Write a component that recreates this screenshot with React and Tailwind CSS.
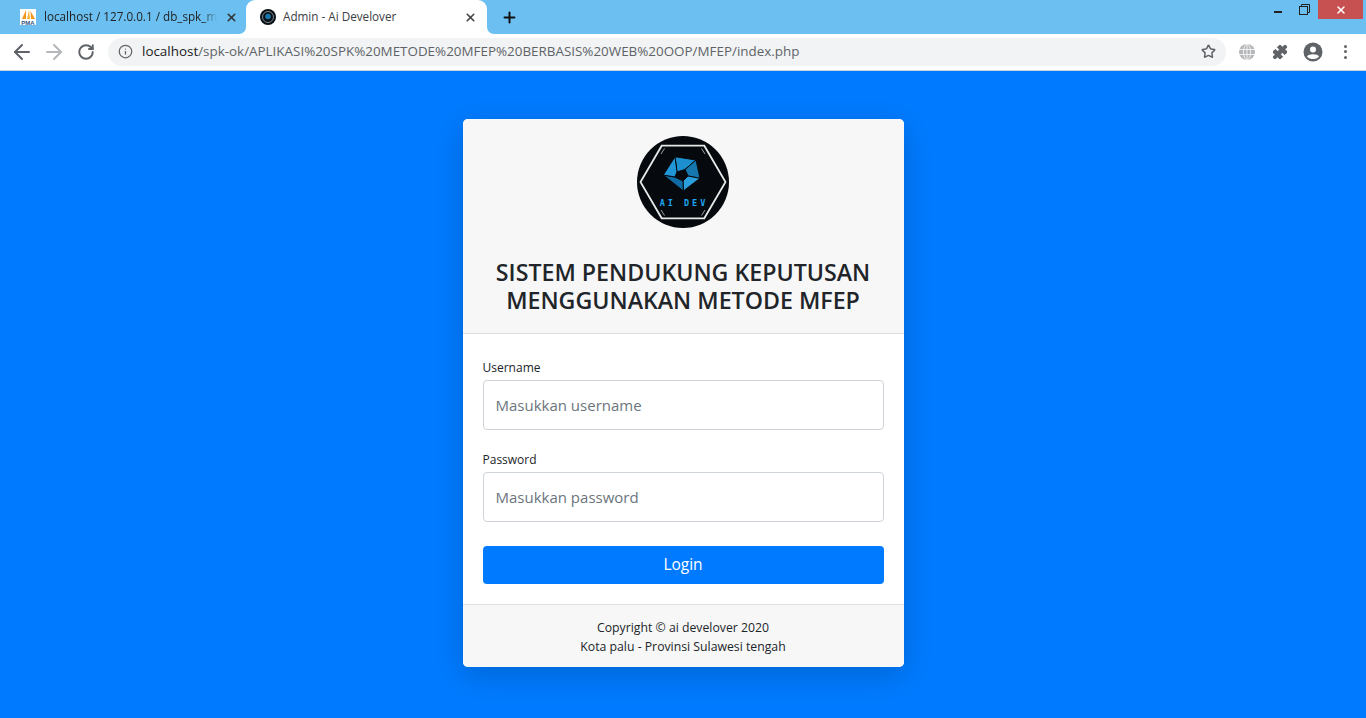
import { ArrowLeft, ArrowRight, RotateCw, Info, Star, X, Plus, Puzzle } from 'lucide-react'

const sans = "font-['Open_Sans','Noto_Sans',sans-serif]"

function PmaIcon() {
  return (
    <svg width="16" height="16" viewBox="0 0 16 16">
      <rect width="16" height="16" fill="#fff" />
      <path d="M2 10 L6 1 L6 10 Z" fill="#f7941d" />
      <path d="M7 10 L9 1 L10 10 Z" fill="#f9b233" />
      <path d="M11 10 L10.5 2 L15 10 Z" fill="#f7941d" />
      <text x="8" y="15.5" textAnchor="middle" fontFamily="'Liberation Sans', sans-serif" fontWeight="700" fontSize="6" fill="#33537f">PMA</text>
    </svg>
  )
}

function SmallLogo() {
  return (
    <svg width="16" height="16" viewBox="0 0 16 16">
      <circle cx="8" cy="8" r="8" fill="#0a1116" />
      <circle cx="8" cy="8" r="5.5" fill="none" stroke="#9aa5ad" strokeWidth="0.8" />
      <circle cx="8" cy="7.5" r="2.8" fill="#1577ad" />
    </svg>
  )
}

function Logo() {
  return (
    <svg width="92" height="92" viewBox="0 0 92 92">
      <circle cx="46" cy="46" r="46" fill="#06090d" />
      <polygon points="24.7,9.7 67.3,9.7 88.5,46 67.3,82.3 24.7,82.3 3.5,46" fill="none" stroke="#e6e8e8" strokeWidth="1.8" />
      <path d="M27.5 12.5L24 18M64.5 12.5L68 18M27.5 79.5L24 74M64.5 79.5L68 74" stroke="#c4c8ca" strokeWidth="0.8" />
      <g stroke="#06090d" strokeWidth="1" strokeLinejoin="round">
        <polygon points="38,20.7 59,24 48,33.5 40,36" fill="#1c8fcf" />
        <polygon points="59,24 63,42.3 51,40 48,33.5" fill="#1577ad" />
        <polygon points="63,42.3 46.3,55 46,45 51,40" fill="#2a9fdb" />
        <polygon points="46.3,55 26.3,39 38,41 46,45" fill="#0f6ba3" />
        <polygon points="26.3,39 38,20.7 40,36 38,41" fill="#2196d6" />
      </g>
      <polygon points="40,36 48,33.5 51,40 46,45 38,41" fill="#06090d" />
      <text x="47" y="70" textAnchor="middle" fontFamily="'DejaVu Sans Mono', monospace" fontWeight="700" fontSize="8.5" letterSpacing="3" fill="#1ea7f0">AI DEV</text>
    </svg>
  )
}

function Field({ label, placeholder, type, className }) {
  return (
    <div className={className}>
      <label className="block text-[12px] leading-[21px] text-[#212529] mb-[2px]">{label}</label>
      <input
        type={type}
        placeholder={placeholder}
        className="block w-full h-[50px] px-3 text-[15px] bg-white border border-[#ced4da] rounded-[4px] text-[#495057] placeholder:text-[#6c757d] outline-none"
      />
    </div>
  )
}

export default function App() {
  return (
    <div className={`h-[718px] w-[1366px] flex flex-col overflow-hidden bg-[#007bff] ${sans}`}>
      {/* Browser tabs */}
      <div className="h-[34px] bg-[#6bc0f1] flex items-stretch shrink-0">
        <div className="w-[246px] pl-5 pr-2 flex items-center gap-2">
          <PmaIcon />
          <span className="flex-1 text-[11.7px] text-[#222] whitespace-nowrap overflow-hidden [mask-image:linear-gradient(to_right,black_92%,transparent)]">localhost / 127.0.0.1 / db_spk_mfep</span>
          <X size={13} strokeWidth={3} className="text-[#333]" />
        </div>
        <div className="relative w-[241px] pl-[14px] pr-[10px] flex items-center gap-2 bg-white rounded-t-[9px]">
          <span className="absolute bottom-0 -left-[7px] w-[7px] h-[7px] bg-white">
            <span className="block w-full h-full bg-[#6bc0f1] rounded-br-[7px]" />
          </span>
          <SmallLogo />
          <span className="flex-1 text-[11.7px] text-[#3c4043] -ml-[1px]">Admin - Ai Develover</span>
          <X size={13} strokeWidth={3} className="text-[#444]" />
          <span className="absolute bottom-0 -right-[7px] w-[7px] h-[7px] bg-white">
            <span className="block w-full h-full bg-[#6bc0f1] rounded-bl-[7px]" />
          </span>
        </div>
        <div className="ml-[14px] flex items-center">
          <Plus size={17} strokeWidth={2.8} className="text-[#111]" />
        </div>
        <div className="ml-auto flex items-start">
          <div className="w-[26px] h-[19px] flex items-center justify-center pt-[4px]"><span className="block w-[8px] h-[2px] bg-[#222]" /></div>
          <div className="w-[26px] h-[19px] flex items-center justify-center">
            <svg width="11" height="11" viewBox="0 0 11 11" fill="none" stroke="#222" strokeWidth="1">
              <rect x="0.5" y="2.5" width="8" height="8" />
              <path d="M2.5 2.5V0.5H10.5V8.5H8.5" />
            </svg>
          </div>
          <div className="ml-[1px] mr-[3px] w-[45px] h-[19px] bg-[#c75050] flex items-center justify-center"><X size={12} strokeWidth={3} className="text-white" /></div>
        </div>
      </div>

      {/* Browser toolbar */}
      <div className="h-[37px] bg-white border-b border-[#ccd3dc] flex items-center shrink-0 pb-[1px]">
        <div className="w-[108px] pl-[10px] flex items-center gap-2">
          <ArrowLeft size={24} strokeWidth={2} className="text-[#5f6368]" />
          <ArrowRight size={24} strokeWidth={2} className="text-[#b4b6b9]" />
          <div className="w-6 h-6 flex items-center justify-center">
            <RotateCw size={18} strokeWidth={2.6} className="text-[#5f6368]" />
          </div>
        </div>
        <div className="w-[1118px] h-[28px] rounded-full bg-[#f1f3f4] flex items-center pl-[10px] pr-[10px]">
          <Info size={15} strokeWidth={2} className="text-[#5f6368]" />
          <span className="ml-[9px] text-[13.42px] text-[#5f6368] whitespace-nowrap">
            <span className="text-[#202124]">localhost</span>/spk-ok/APLIKASI%20SPK%20METODE%20MFEP%20BERBASIS%20WEB%20OOP/MFEP/index.php
          </span>
          <Star size={15} strokeWidth={2.4} className="ml-auto text-[#5f6368]" />
        </div>
        <div className="flex-1 flex items-center pl-[13px] gap-[16px]">
          <svg width="16" height="16" viewBox="0 0 16 16" fill="none" stroke="#fff" strokeWidth="0.8">
            <circle cx="8" cy="8" r="8" fill="#b5b7b9" stroke="none" />
            <ellipse cx="8" cy="8" rx="3.5" ry="8" />
            <path d="M0 5.5H16M0 10.5H16M8 0V16" />
          </svg>
          <Puzzle size={16} fill="#5f6368" strokeWidth={1.5} className="text-[#5f6368] ml-[1px]" />
          <svg width="20" height="20" viewBox="0 0 20 20" className="-ml-[1px]">
            <circle cx="10" cy="10" r="9.5" fill="#5f6368" />
            <circle cx="10" cy="7.5" r="3" fill="#fff" />
            <path d="M4 14.5C5.5 11.5 14.5 11.5 16 14.5C14.5 16.5 12 17 10 17C8 17 5.5 16.5 4 14.5Z" fill="#fff" />
          </svg>
          <div className="flex flex-col gap-[2.5px] ml-[5px]">
            <span className="w-[3px] h-[3px] rounded-full bg-[#5f6368]" />
            <span className="w-[3px] h-[3px] rounded-full bg-[#5f6368]" />
            <span className="w-[3px] h-[3px] rounded-full bg-[#5f6368]" />
          </div>
        </div>
      </div>

      {/* Page */}
      <div className="flex-1 flex justify-center pt-[48px]">
        <div className="w-[441px] h-[548px] bg-white rounded-[5px] overflow-hidden shadow-[0_8px_32px_rgba(0,0,0,0.18)] flex flex-col">
          <div className="h-[215px] bg-[#f7f7f7] border-b border-[#dfdfdf] pt-[17px] flex flex-col items-center shrink-0">
            <Logo />
            <h3 className="mt-[30px] text-[23.2px] leading-[28px] font-semibold text-[#212529] text-center">
              SISTEM PENDUKUNG KEPUTUSAN<br />MENGGUNAKAN METODE MFEP
            </h3>
          </div>
          <div className="flex-1 px-5 pt-[23px]">
            <Field label="Username" placeholder="Masukkan username" type="text" className="mb-[19px]" />
            <Field label="Password" placeholder="Masukkan password" type="password" className="mb-6" />
            <button className="block w-full h-[38px] bg-[#007bff] rounded-[4px] text-white text-[15.5px]">Login</button>
          </div>
          <div className="h-[63px] bg-[#f7f7f7] border-t border-[#dfdfdf] pt-[2px] flex flex-col items-center justify-center text-[12.25px] leading-[19px] text-[#212529] shrink-0">
            <p>Copyright © ai develover 2020</p>
            <p>Kota palu - Provinsi Sulawesi tengah</p>
          </div>
        </div>
      </div>
    </div>
  )
}
